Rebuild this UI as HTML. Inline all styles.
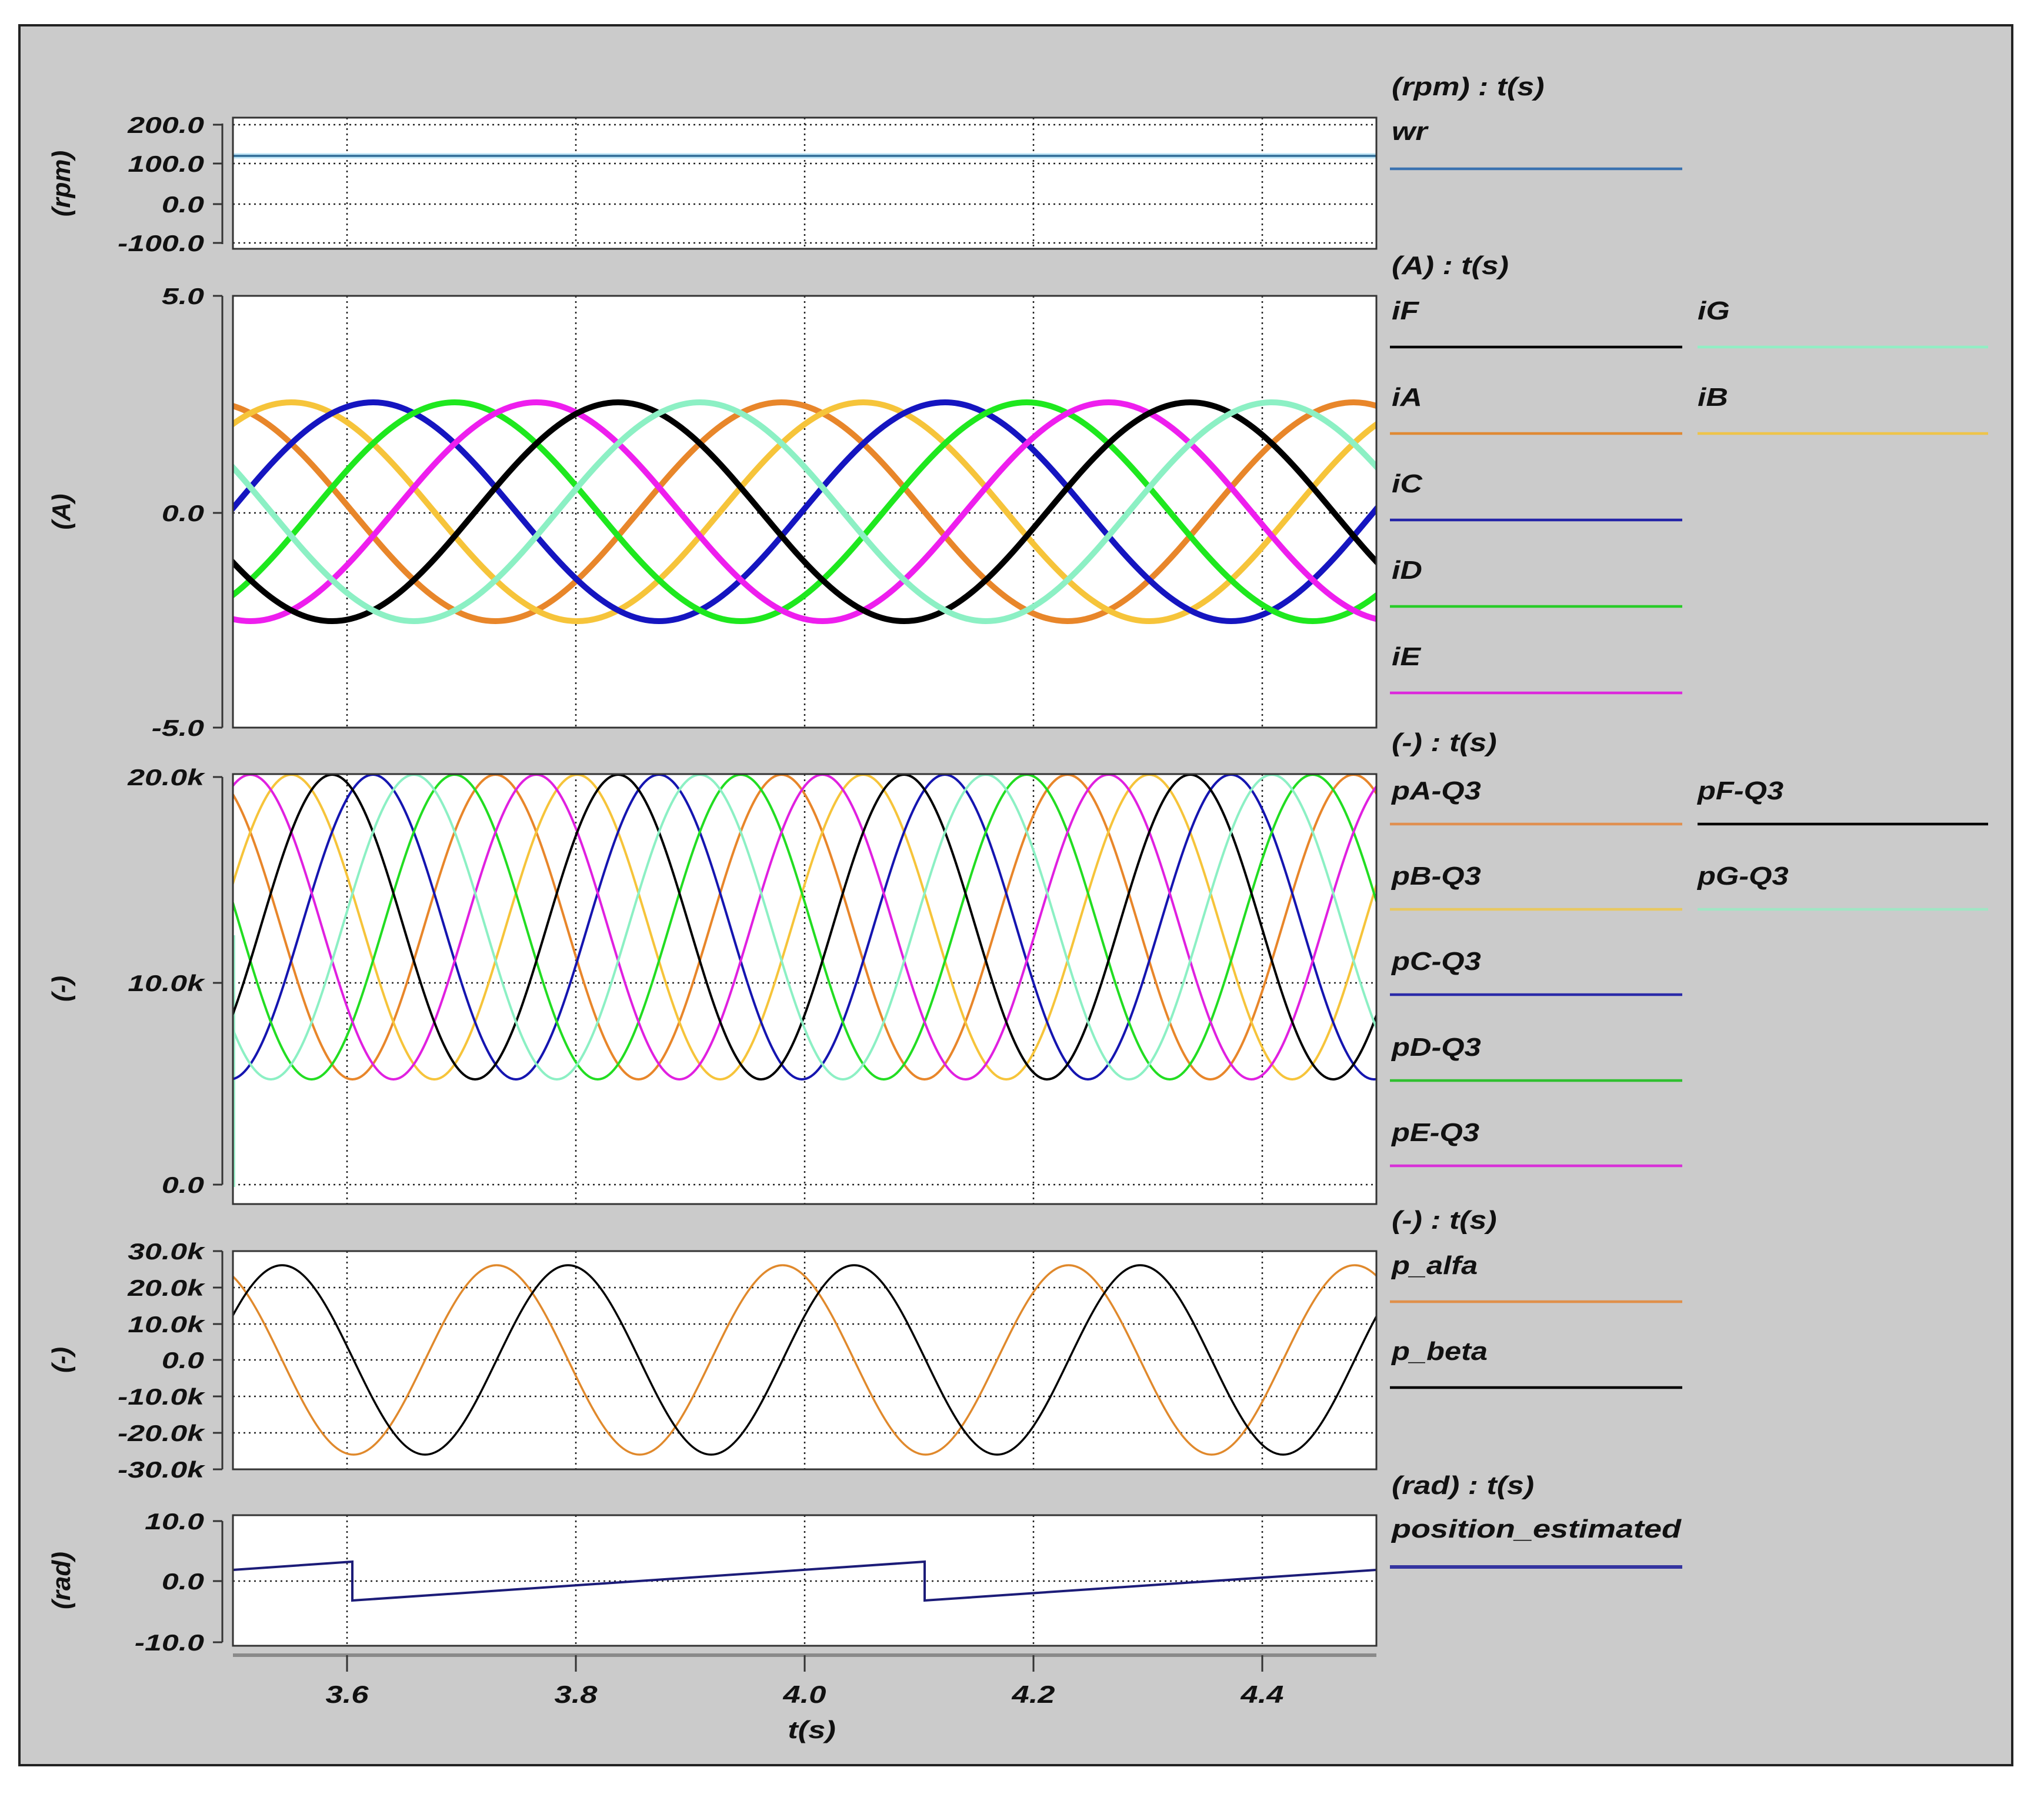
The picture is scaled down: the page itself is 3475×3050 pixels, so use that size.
<!DOCTYPE html>
<html><head><meta charset="utf-8"><style>
html,body{margin:0;padding:0;background:#fff}
svg{display:block}
text{font-family:"Liberation Sans",Arial,sans-serif;font-weight:bold;font-style:italic;fill:#111}
.tk{font-size:39px}
.lg{font-size:44px}
.ax{font-size:44px}
.g{stroke:#222;stroke-width:2.5;stroke-dasharray:3 6;fill:none}
.box{fill:none;stroke:#333;stroke-width:3}
.yax{stroke:#333;stroke-width:3;fill:none}
</style></head><body>
<svg width="3475" height="3050" viewBox="0 0 3475 3050" xmlns="http://www.w3.org/2000/svg">
<defs>
<path id="w" vector-effect="non-scaling-stroke" fill="none" d="M-2,0 c.0815,-.5123 .1595,-1 .25,-1 c.0905,0 .1685,.4877 .25,1 c.0815,.5123 .1595,1 .25,1 c.0905,0 .1685,-.4877 .25,-1 c.0815,-.5123 .1595,-1 .25,-1 c.0905,0 .1685,.4877 .25,1 c.0815,.5123 .1595,1 .25,1 c.0905,0 .1685,-.4877 .25,-1 c.0815,-.5123 .1595,-1 .25,-1 c.0905,0 .1685,.4877 .25,1 c.0815,.5123 .1595,1 .25,1 c.0905,0 .1685,-.4877 .25,-1 c.0815,-.5123 .1595,-1 .25,-1 c.0905,0 .1685,.4877 .25,1 c.0815,.5123 .1595,1 .25,1 c.0905,0 .1685,-.4877 .25,-1 c.0815,-.5123 .1595,-1 .25,-1 c.0905,0 .1685,.4877 .25,1 c.0815,.5123 .1595,1 .25,1 c.0905,0 .1685,-.4877 .25,-1 c.0815,-.5123 .1595,-1 .25,-1 c.0905,0 .1685,.4877 .25,1 c.0815,.5123 .1595,1 .25,1 c.0905,0 .1685,-.4877 .25,-1 c.0815,-.5123 .1595,-1 .25,-1 c.0905,0 .1685,.4877 .25,1 c.0815,.5123 .1595,1 .25,1 c.0905,0 .1685,-.4877 .25,-1 c.0815,-.5123 .1595,-1 .25,-1 c.0905,0 .1685,.4877 .25,1 c.0815,.5123 .1595,1 .25,1 c.0905,0 .1685,-.4877 .25,-1 c.0815,-.5123 .1595,-1 .25,-1 c.0905,0 .1685,.4877 .25,1 c.0815,.5123 .1595,1 .25,1 c.0905,0 .1685,-.4877 .25,-1 c.0815,-.5123 .1595,-1 .25,-1 c.0905,0 .1685,.4877 .25,1 c.0815,.5123 .1595,1 .25,1 c.0905,0 .1685,-.4877 .25,-1"/>
<clipPath id="c2"><rect x="396" y="503" width="1944" height="735"/></clipPath>
<clipPath id="c3"><rect x="396" y="1316" width="1944" height="731"/></clipPath>
<clipPath id="c4"><rect x="396" y="2127" width="1944" height="371"/></clipPath>
</defs>
<rect x="0" y="0" width="3475" height="3050" fill="#fff"/>
<rect x="33" y="43" width="3388" height="2958" fill="#cbcbcb" stroke="#222" stroke-width="4"/>

<rect x="396" y="200" width="1944" height="223" fill="#fff"/>
<rect x="396" y="503" width="1944" height="734" fill="#fff"/>
<rect x="396" y="1316" width="1944" height="731" fill="#fff"/>
<rect x="396" y="2127" width="1944" height="371" fill="#fff"/>
<rect x="396" y="2576" width="1944" height="222" fill="#fff"/>

<g class="g">
<path d="M590,200V423M979,200V423M1368,200V423M1757,200V423M2146,200V423"/>
<path d="M590,503V1237M979,503V1237M1368,503V1237M1757,503V1237M2146,503V1237"/>
<path d="M590,1316V2047M979,1316V2047M1368,1316V2047M1757,1316V2047M2146,1316V2047"/>
<path d="M590,2127V2498M979,2127V2498M1368,2127V2498M1757,2127V2498M2146,2127V2498"/>
<path d="M590,2576V2798M979,2576V2798M1368,2576V2798M1757,2576V2798M2146,2576V2798"/>
<path d="M396,212H2340M396,278H2340M396,347H2340M396,413H2340"/>
<path d="M396,872H2340"/>
<path d="M396,1671H2340M396,2014H2340"/>
<path d="M396,2189H2340M396,2251H2340M396,2312H2340M396,2374H2340M396,2436H2340"/>
<path d="M396,2688H2340"/>
</g>

<path d="M396,265H2340" stroke="#bfe6f7" stroke-width="9" fill="none"/>
<path d="M396,265H2340" stroke="#2f6a96" stroke-width="3.5" fill="none"/>

<g clip-path="url(#c2)" stroke-width="10" stroke-linejoin="round">
<use href="#w" transform="translate(113,870) scale(972.5,186)" stroke="#e8862a"/>
<use href="#w" transform="translate(252,870) scale(972.5,186)" stroke="#f6c43a"/>
<use href="#w" transform="translate(391,870) scale(972.5,186)" stroke="#1515c0"/>
<use href="#w" transform="translate(529.9,870) scale(972.5,186)" stroke="#1ee81e"/>
<use href="#w" transform="translate(668.9,870) scale(972.5,186)" stroke="#ee1eee"/>
<use href="#w" transform="translate(807.8,870) scale(972.5,186)" stroke="#000"/>
<use href="#w" transform="translate(946.8,870) scale(972.5,186)" stroke="#8cf0c4"/>
</g>

<g clip-path="url(#c3)" stroke-width="4">
<path d="M398,1590V2018" stroke="#9ef2cc" stroke-width="4" fill="none"/>
<use href="#w" transform="translate(234.5,1576) scale(486.25,259)" stroke="#e8862a"/>
<use href="#w" transform="translate(373.5,1576) scale(486.25,259)" stroke="#f6c43a"/>
<use href="#w" transform="translate(512.4,1576) scale(486.25,259)" stroke="#1515b0"/>
<use href="#w" transform="translate(651.4,1576) scale(486.25,259)" stroke="#22dd22"/>
<use href="#w" transform="translate(790.4,1576) scale(486.25,259)" stroke="#e020e0"/>
<use href="#w" transform="translate(929.3,1576) scale(486.25,259)" stroke="#000"/>
<use href="#w" transform="translate(1068.3,1576) scale(486.25,259)" stroke="#8cf0c4"/>
</g>

<g clip-path="url(#c4)" stroke-width="3.5">
<use href="#w" transform="translate(722.7,2312) scale(486.25,161)" stroke="#e0892c"/>
<use href="#w" transform="translate(844.3,2312) scale(486.25,161)" stroke="#000"/>
</g>

<polyline points="396,2669 599,2655 599,2721 1572,2655 1572,2721 2340,2669" fill="none" stroke="#1c1c78" stroke-width="4"/>

<rect class="box" x="396" y="200" width="1944" height="223"/>
<rect class="box" x="396" y="503" width="1944" height="734"/>
<rect class="box" x="396" y="1316" width="1944" height="731"/>
<rect class="box" x="396" y="2127" width="1944" height="371"/>
<rect class="box" x="396" y="2576" width="1944" height="222"/>

<g class="yax">
<path d="M378,210V415M362,212H378M362,278H378M362,347H378M362,413H378"/>
<path d="M378,503V1237M362,503H378M362,872H378M362,1237H378"/>
<path d="M378,1321V2014M362,1321H378M362,1671H378M362,2014H378"/>
<path d="M378,2127V2498M362,2127H378M362,2189H378M362,2251H378M362,2312H378M362,2374H378M362,2436H378M362,2498H378"/>
<path d="M378,2586V2792M362,2586H378M362,2688H378M362,2792H378"/>
</g>
<path d="M396,2814H2340" stroke="#8a8a8a" stroke-width="6"/>
<path d="M590,2814V2842M979,2814V2842M1368,2814V2842M1757,2814V2842M2146,2814V2842" stroke="#333" stroke-width="3"/>

<g class="tk" text-anchor="end">
<text transform="translate(347,226) scale(1.33,1)">200.0</text>
<text transform="translate(347,292) scale(1.33,1)">100.0</text>
<text transform="translate(347,361) scale(1.33,1)">0.0</text>
<text transform="translate(347,427) scale(1.33,1)">-100.0</text>
<text transform="translate(347,517) scale(1.33,1)">5.0</text>
<text transform="translate(347,886) scale(1.33,1)">0.0</text>
<text transform="translate(347,1251) scale(1.33,1)">-5.0</text>
<text transform="translate(347,1335) scale(1.33,1)">20.0k</text>
<text transform="translate(347,1685) scale(1.33,1)">10.0k</text>
<text transform="translate(347,2028) scale(1.33,1)">0.0</text>
<text transform="translate(347,2141) scale(1.33,1)">30.0k</text>
<text transform="translate(347,2203) scale(1.33,1)">20.0k</text>
<text transform="translate(347,2265) scale(1.33,1)">10.0k</text>
<text transform="translate(347,2326) scale(1.33,1)">0.0</text>
<text transform="translate(347,2388) scale(1.33,1)">-10.0k</text>
<text transform="translate(347,2450) scale(1.33,1)">-20.0k</text>
<text transform="translate(347,2512) scale(1.33,1)">-30.0k</text>
<text transform="translate(347,2600) scale(1.33,1)">10.0</text>
<text transform="translate(347,2702) scale(1.33,1)">0.0</text>
<text transform="translate(347,2806) scale(1.33,1)">-10.0</text>
</g>

<g class="ax" text-anchor="middle">
<text transform="translate(119,312) rotate(-90)">(rpm)</text>
<text transform="translate(119,870) rotate(-90)">(A)</text>
<text transform="translate(119,1681) rotate(-90)">(-)</text>
<text transform="translate(119,2312) rotate(-90)">(-)</text>
<text transform="translate(119,2687) rotate(-90)">(rad)</text>
</g>

<g class="tk" text-anchor="middle" style="font-size:42px">
<text transform="translate(590,2895) scale(1.25,1)">3.6</text>
<text transform="translate(979,2895) scale(1.25,1)">3.8</text>
<text transform="translate(1368,2895) scale(1.25,1)">4.0</text>
<text transform="translate(1757,2895) scale(1.25,1)">4.2</text>
<text transform="translate(2146,2895) scale(1.25,1)">4.4</text>
<text transform="translate(1380,2955) scale(1.25,1)">t(s)</text>
</g>

<g class="lg">
<text transform="translate(2366,162) scale(1.18,1)">(rpm) : t(s)</text>
<text transform="translate(2366,238) scale(1.18,1)">wr</text>
<text transform="translate(2366,466) scale(1.18,1)">(A) : t(s)</text>
<text transform="translate(2366,543) scale(1.18,1)">iF</text>
<text transform="translate(2886,543) scale(1.18,1)">iG</text>
<text transform="translate(2366,690) scale(1.18,1)">iA</text>
<text transform="translate(2886,690) scale(1.18,1)">iB</text>
<text transform="translate(2366,837) scale(1.18,1)">iC</text>
<text transform="translate(2366,984) scale(1.18,1)">iD</text>
<text transform="translate(2366,1131) scale(1.18,1)">iE</text>
<text transform="translate(2366,1277) scale(1.18,1)">(-) : t(s)</text>
<text transform="translate(2366,1359) scale(1.15,1)">pA-Q3</text>
<text transform="translate(2886,1359) scale(1.15,1)">pF-Q3</text>
<text transform="translate(2366,1504) scale(1.15,1)">pB-Q3</text>
<text transform="translate(2886,1504) scale(1.15,1)">pG-Q3</text>
<text transform="translate(2366,1649) scale(1.15,1)">pC-Q3</text>
<text transform="translate(2366,1795) scale(1.15,1)">pD-Q3</text>
<text transform="translate(2366,1940) scale(1.15,1)">pE-Q3</text>
<text transform="translate(2366,2089) scale(1.18,1)">(-) : t(s)</text>
<text transform="translate(2366,2166) scale(1.15,1)">p_alfa</text>
<text transform="translate(2366,2312) scale(1.15,1)">p_beta</text>
<text transform="translate(2366,2540) scale(1.18,1)">(rad) : t(s)</text>
<text transform="translate(2366,2614) scale(1.0,1)" textLength="492" lengthAdjust="spacingAndGlyphs">position_estimated</text>
</g>

<g stroke-width="4.5" fill="none">
<path d="M2363,287H2860" stroke="#3a72b0"/>
<path d="M2363,590H2860" stroke="#000"/>
<path d="M2886,590H3380" stroke="#92eec4"/>
<path d="M2363,737H2860" stroke="#e08a34"/>
<path d="M2886,737H3380" stroke="#eec44a"/>
<path d="M2363,884H2860" stroke="#2424a8"/>
<path d="M2363,1031H2860" stroke="#28cc28"/>
<path d="M2363,1178H2860" stroke="#dc28dc"/>
<path d="M2363,1401H2860" stroke="#e09050"/>
<path d="M2886,1401H3380" stroke="#000"/>
<path d="M2363,1546H2860" stroke="#e8c860"/>
<path d="M2886,1546H3380" stroke="#a0e6c4"/>
<path d="M2363,1691H2860" stroke="#2a2aa8"/>
<path d="M2363,1837H2860" stroke="#30c030"/>
<path d="M2363,1982H2860" stroke="#d830d8"/>
<path d="M2363,2213H2860" stroke="#e0904a"/>
<path d="M2363,2359H2860" stroke="#000"/>
<path d="M2363,2664H2860" stroke="#3434a0" stroke-width="6"/>
</g>
</svg>
</body></html>
